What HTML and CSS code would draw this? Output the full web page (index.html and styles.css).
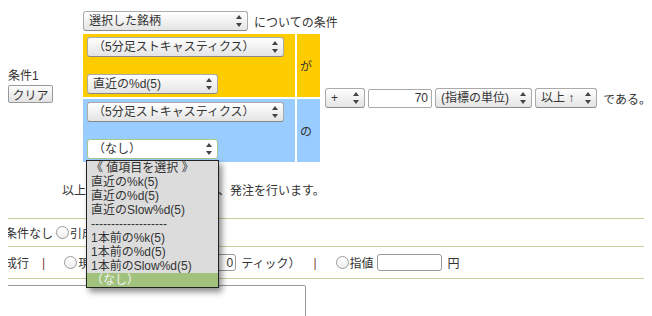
FILE: index.html
```html
<!DOCTYPE html>
<html lang="ja">
  <head>
    <meta charset="UTF-8" />
    <meta name="viewport" content="width=device-width, initial-scale=1.0" />
    <title>発注条件</title>
    <link rel="stylesheet" href="styles.css">
  </head>
  <body>
    <div class="cond">
      <div class="cond-head">
        <div class="cond-name">条件1</div>
        <button class="btn">クリア</button>
      </div>

      <div class="cond-target">
        <span class="sel"><select class="w-brand"><option>選択した銘柄</option></select></span>
        <span class="txt">についての条件</span>
      </div>

      <div class="pair yellow">
        <span class="sel"><select class="w-ind"><option>（5分足ストキャスティクス）</option></select></span>
        <span class="sel"><select class="w-val"><option>直近の%d(5)</option></select></span>
      </div>
      <div class="particle yellow">が</div>

      <div class="cond-value">
        <span class="sel"><select class="w-sign"><option>+</option></select></span>
        <input type="text" class="num" value="70" />
        <span class="sel"><select class="w-unit"><option>(指標の単位)</option></select></span>
        <span class="sel"><select class="w-cmp"><option>以上 ↑</option></select></span>
        <span class="txt">である。</span>
      </div>

      <div class="pair blue">
        <span class="sel"><select class="w-ind"><option>（5分足ストキャスティクス）</option></select></span>
        <span class="sel open">
          <select class="w-val"><option>（なし）</option></select>
          <ul class="menu">
            <li>《 値項目を選択 》</li>
            <li>直近の%k(5)</li>
            <li>直近の%d(5)</li>
            <li>直近のSlow%d(5)</li>
            <li>-------------------</li>
            <li>1本前の%k(5)</li>
            <li>1本前の%d(5)</li>
            <li>1本前のSlow%d(5)</li>
            <li class="on">（なし）</li>
          </ul>
        </span>
      </div>
      <div class="particle blue">の</div>
    </div>

    <p class="note">以上の条件が全て成立したら、発注を行います。</p>

    <div class="opts">
      <div class="opt-row">
        <label><input type="radio" name="cut" checked />条件なし</label>
        <label><input type="radio" name="cut" />引成</label>
      </div>
      <div class="opt-row">
        <label><input type="radio" name="price" checked />成行</label>
        <span class="sep">|</span>
        <label><input type="radio" name="price" />現在値から（</label>
        <input type="text" class="tick" value="0" />
        <span class="txt">ティック）</span>
        <span class="sep">|</span>
        <label><input type="radio" name="price" />指値</label>
        <input type="text" class="limit" />
        <span class="yen">円</span>
      </div>
      <textarea class="memo"></textarea>
    </div>
  </body>
</html>
```

FILE: styles.css
```css
html,
body {
  overflow: hidden;
}

body {
  margin: 10px 8px 8px;
  font-family: "Liberation Sans", "Noto Sans CJK JP", sans-serif;
  font-size: 12px;
  color: #333;
  white-space: nowrap;
}

/* condition block */
.cond {
  display: grid;
  grid-template-columns: 73px 212px 23px auto;
  grid-template-rows: 22px 63px 63px;
  gap: 2px;
}

.cond-head {
  grid-row: 1 / 4;
  align-self: center;
}

.cond-name {
  line-height: 14px;
  margin-bottom: 2px;
}

.btn {
  height: 18px;
  width: 45px;
  padding: 0;
  font: inherit;
  color: #333;
  border: 1px solid #9a9a9a;
  border-radius: 2px;
  background: linear-gradient(#fdfdfd, #e2e2e2);
}

.cond-target {
  grid-column: 2 / 5;
  display: flex;
  align-items: center;
}

.cond-target .txt {
  margin-left: 6px;
}

.yellow {
  background-color: #ffcc00;
}

.blue {
  background-color: #99ccff;
}

.pair {
  display: flex;
  flex-direction: column;
  justify-content: space-between;
  align-items: flex-start;
  padding: 3px 4px;
}

.particle {
  display: flex;
  align-items: center;
  padding-left: 3px;
}

.cond-value {
  grid-column: 4;
  grid-row: 2 / 4;
  align-self: center;
  display: flex;
  align-items: center;
  gap: 3px;
  padding-left: 3px;
}

.cond-value .txt {
  margin-left: 3px;
}

/* select boxes */
.sel {
  position: relative;
  display: inline-flex;
}

.sel select {
  appearance: none;
  height: 20px;
  margin: 0;
  padding: 0 16px 0 5px;
  font: inherit;
  color: #333;
  border: 1px solid #aaa;
  border-bottom-color: #888;
  border-radius: 3px;
  background: linear-gradient(#ffffff, #e4e4e4);
}

.sel::before,
.sel::after {
  content: "";
  position: absolute;
  right: 6px;
  border-left: 3px solid transparent;
  border-right: 3px solid transparent;
  pointer-events: none;
}

.sel::before {
  top: 4px;
  border-bottom: 4px solid #444;
}

.sel::after {
  top: 12px;
  border-top: 4px solid #444;
}

.w-brand { width: 165px; }
.w-ind { width: 197px; }
.w-val { width: 131px; }
.w-sign { width: 40px; padding-left: 6px; }
.w-unit { width: 97px; padding-left: 4px; }
.w-cmp { width: 62px; padding-left: 6px; }

.open select {
  background: #fff;
  border-color: #a8c88a;
}

.num {
  width: 64px;
  height: 19px;
  box-sizing: border-box;
  padding: 0 3px;
  text-align: right;
  font: inherit;
  color: #333;
  border: 1px solid #aaa;
  border-radius: 2px;
}

/* opened option list */
.menu {
  position: absolute;
  top: 21px;
  left: -1px;
  z-index: 2;
  width: 131px;
  margin: 0;
  padding: 0;
  list-style: none;
  background-color: #dcdcdc;
  border: 1px solid #222;
  box-shadow: 3px 4px 6px rgba(0, 0, 0, 0.45);
}

.menu li {
  height: 14px;
  line-height: 14px;
  padding-left: 4px;
}

.menu .on {
  background-color: #a0c27c;
  color: #f4f4f4;
}

/* lower part */
.note {
  margin: 20px 0 0 54px;
  line-height: 18px;
}

.opts {
  margin: 18px -8px 0 -22px;
}

.opt-row {
  display: flex;
  align-items: center;
  height: 27px;
  border-top: 1px solid #cccc99;
}

.opt-row + .opt-row {
  height: 31px;
  border-bottom: 1px solid #cccc99;
}

.opt-row label {
  display: flex;
  align-items: center;
}

.opt-row input[type="radio"] {
  appearance: none;
  width: 13px;
  height: 13px;
  margin: 0 1px 0 5px;
  border: 1px solid #999;
  border-radius: 50%;
  background: linear-gradient(#fff, #eee);
}

.opt-row input[type="radio"]:checked {
  background: radial-gradient(#7aa84e 40%, #cfe2b8 55%);
  border-color: #8cae6a;
}

.opt-row label + label {
  margin-left: -2px;
}

.sep {
  margin: 0 14px 0 13px;
  color: #7a3a3a;
}

.tick,
.limit {
  height: 17px;
  box-sizing: border-box;
  font: inherit;
  color: #333;
  border: 1px solid #999;
  border-radius: 3px;
}

.tick {
  width: 83px;
  margin: 0 5px 0 3px;
  text-align: right;
  padding: 0 2px;
}

.limit {
  width: 65px;
  margin-left: 3px;
}

.yen {
  margin-left: 6px;
}

.memo {
  display: block;
  width: 320px;
  height: 60px;
  box-sizing: border-box;
  margin-top: 6px;
  border: 1px solid #999;
  border-radius: 2px;
  resize: none;
}
```
